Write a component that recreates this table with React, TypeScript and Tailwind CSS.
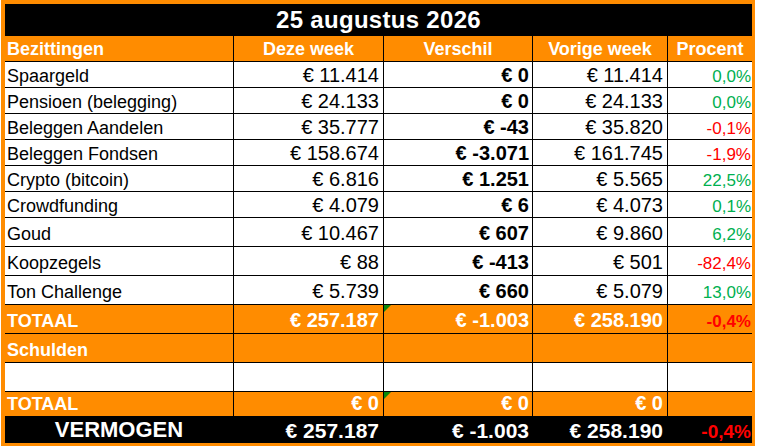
import React from "react";

type Row = [string, string, string, string, string, boolean];

const rows: Row[] = [
  ["Spaargeld", "€ 11.414", "€ 0", "€ 11.414", "0,0%", true],
  ["Pensioen (belegging)", "€ 24.133", "€ 0", "€ 24.133", "0,0%", true],
  ["Beleggen Aandelen", "€ 35.777", "€ -43", "€ 35.820", "-0,1%", false],
  ["Beleggen Fondsen", "€ 158.674", "€ -3.071", "€ 161.745", "-1,9%", false],
  ["Crypto (bitcoin)", "€ 6.816", "€ 1.251", "€ 5.565", "22,5%", true],
  ["Crowdfunding", "€ 4.079", "€ 6", "€ 4.073", "0,1%", true],
  ["Goud", "€ 10.467", "€ 607", "€ 9.860", "6,2%", true],
  ["Koopzegels", "€ 88", "€ -413", "€ 501", "-82,4%", false],
  ["Ton Challenge", "€ 5.739", "€ 660", "€ 5.079", "13,0%", true],
];

function Tri() {
  return (
    <svg className="absolute left-0 top-0" width="7" height="7" viewBox="0 0 7 7">
      <polygon points="0,0 7,0 0,7" fill="#0a8a0a" />
    </svg>
  );
}

export default function App() {
  return (
    <div className="bg-white w-[757px] h-[447px] font-['Liberation_Sans',Arial,sans-serif]">
      <div className="ml-[1px] w-[754px] border-l-4 border-t-4 border-r-[3px] border-b-[3px] border-[#ff8c00]">
        <div className="grid grid-cols-[228px_149px_148px_134px_84px] grid-rows-[31px_25px_25px_25px_25px_25px_25px_25px_28px_28px_28px_28px_28px_28px_24px_26px] gap-px bg-black w-[747px]">
          {/* title */}
          <div className="col-span-5 bg-black flex items-end justify-center pb-[3px] text-white font-bold text-[24px] leading-none tracking-[0.3px]">
            25 augustus 2026
          </div>
          {/* header */}
          <div className="bg-[#ff8c00] flex items-end pl-[2px] pb-[3px] text-white font-bold text-[18px] leading-none">Bezittingen</div>
          <div className="bg-[#ff8c00] flex items-end justify-center pb-[3px] text-white font-bold text-[18px] leading-none">Deze week</div>
          <div className="bg-[#ff8c00] flex items-end justify-center pb-[3px] text-white font-bold text-[18px] leading-none">Verschil</div>
          <div className="bg-[#ff8c00] flex items-end justify-center pb-[3px] text-white font-bold text-[18px] leading-none">Vorige week</div>
          <div className="bg-[#ff8c00] flex items-end justify-center pb-[3px] text-white font-bold text-[18px] leading-none">Procent</div>
          {rows.map((r, i) => {
            const pb = i < 6 ? "pb-[2px]" : "pb-[3px]";
            return (
              <React.Fragment key={r[0]}>
                <div className={`bg-white flex items-end pl-[2px] ${pb} text-black text-[18px] leading-none`}>{r[0]}</div>
                <div className={`bg-white flex items-end justify-end pr-[4px] ${pb} text-black text-[20px] leading-none`}>{r[1]}</div>
                <div className={`bg-white flex items-end justify-end pr-[3px] ${pb} text-black font-bold text-[20px] leading-none`}>{r[2]}</div>
                <div className={`bg-white flex items-end justify-end pr-[4px] ${pb} text-black text-[20px] leading-none`}>{r[3]}</div>
                <div className={`bg-white flex items-end justify-end pr-[1px] ${pb} text-[17px] leading-none ${r[5] ? "text-[#00b050]" : "text-[#ff0000]"}`}>{r[4]}</div>
              </React.Fragment>
            );
          })}
          {/* TOTAAL */}
          <div className="bg-[#ff8c00] flex items-end pl-[2px] pb-[3px] text-white font-bold text-[18px] leading-none">TOTAAL</div>
          <div className="bg-[#ff8c00] flex items-end justify-end pr-[4px] pb-[3px] text-white font-bold text-[20px] leading-none">€ 257.187</div>
          <div className="relative bg-[#ff8c00] flex items-end justify-end pr-[3px] pb-[3px] text-white font-bold text-[20px] leading-none">
            <Tri />€ -1.003
          </div>
          <div className="bg-[#ff8c00] flex items-end justify-end pr-[4px] pb-[3px] text-white font-bold text-[20px] leading-none">€ 258.190</div>
          <div className="bg-[#ff8c00] flex items-end justify-end pr-[1px] pb-[3px] text-[#ff0000] font-bold text-[17px] leading-none">-0,4%</div>
          {/* Schulden */}
          <div className="bg-[#ff8c00] flex items-end pl-[2px] pb-[3px] text-white font-bold text-[18px] leading-none">Schulden</div>
          <div className="bg-[#ff8c00]" />
          <div className="bg-[#ff8c00]" />
          <div className="bg-[#ff8c00]" />
          <div className="bg-[#ff8c00]" />
          {/* empty */}
          <div className="bg-white" />
          <div className="bg-white" />
          <div className="bg-white" />
          <div className="bg-white" />
          <div className="bg-white" />
          {/* TOTAAL 2 */}
          <div className="bg-[#ff8c00] flex items-end pl-[2px] pb-[3px] text-white font-bold text-[18px] leading-none">TOTAAL</div>
          <div className="bg-[#ff8c00] flex items-end justify-end pr-[4px] pb-[3px] text-white font-bold text-[20px] leading-none">€ 0</div>
          <div className="relative bg-[#ff8c00] flex items-end justify-end pr-[3px] pb-[3px] text-white font-bold text-[20px] leading-none">
            <Tri />€ 0
          </div>
          <div className="bg-[#ff8c00] flex items-end justify-end pr-[4px] pb-[3px] text-white font-bold text-[20px] leading-none">€ 0</div>
          <div className="bg-[#ff8c00]" />
          {/* VERMOGEN */}
          <div className="bg-black flex items-end justify-center pb-[2px] text-white font-bold text-[22px] leading-none">VERMOGEN</div>
          <div className="bg-black flex items-end justify-end pr-[4px] pb-[2px] text-white font-bold text-[21px] leading-none">€ 257.187</div>
          <div className="bg-black flex items-end justify-end pr-[3px] pb-[2px] text-white font-bold text-[21px] leading-none">€ -1.003</div>
          <div className="bg-black flex items-end justify-end pr-[4px] pb-[2px] text-white font-bold text-[21px] leading-none">€ 258.190</div>
          <div className="bg-black flex items-end justify-end pr-[1px] pb-[2px] text-[#ff0000] font-bold text-[19px] leading-none">-0,4%</div>
        </div>
      </div>
    </div>
  );
}
